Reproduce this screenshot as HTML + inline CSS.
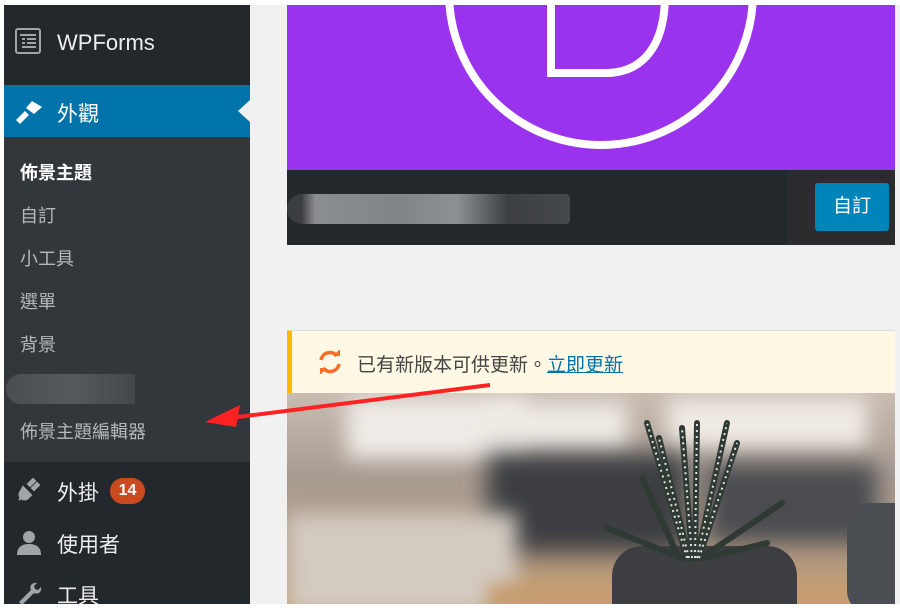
<!DOCTYPE html>
<html><head><meta charset="utf-8"><style>
*{margin:0;padding:0;box-sizing:border-box}
body{width:900px;height:604px;overflow:hidden;background:#fff;font-family:"Liberation Sans","Noto Sans CJK TC",sans-serif;position:relative}
.abs{position:absolute}
#side{left:4px;top:5px;width:246px;height:599px;background:#23282d}
.main{left:250px;top:5px;width:650px;height:599px;background:#f1f1f1}
.sub{color:#b4b9be;font-size:18px;left:20px}
</style></head><body>
<div class="abs" id="side"></div>
<div class="abs main"></div>
<svg class="abs" style="left:14px;top:27px" width="28" height="28" viewBox="0 0 28 28"><rect x="2" y="2" width="24" height="24" rx="2" fill="none" stroke="#a0a5aa" stroke-width="2"/><path d="M6 8h16M8 12h3M13 12h9M8 16h3M13 16h9M8 20h14" stroke="#a0a5aa" stroke-width="2"/></svg>
<div class="abs" style="left:57px;top:30px;color:#eee;font-size:22px">WPForms</div>
<div class="abs" style="left:4px;top:85px;width:246px;height:52px;background:#0073aa"></div>
<div class="abs" style="left:238px;top:100px;width:0;height:0;border-top:11px solid transparent;border-bottom:11px solid transparent;border-right:12px solid #f1f1f1"></div>
<svg class="abs" style="left:14px;top:98px" width="30" height="26" viewBox="0 0 30 26"><path d="M2 22l9-9 4 4-9 9z" fill="#fff"/><path d="M12 10l6-7 10 6-8 7z" fill="#fff"/></svg>
<div class="abs" style="left:57px;top:98px;color:#fff;font-size:21px">外觀</div>
<div class="abs" style="left:4px;top:137px;width:246px;height:325px;background:#32373c"></div>
<div class="abs sub" style="top:159px;color:#fff;font-weight:bold">佈景主題</div>
<div class="abs sub" style="top:202px">自訂</div>
<div class="abs sub" style="top:245px">小工具</div>
<div class="abs sub" style="top:288px">選單</div>
<div class="abs sub" style="top:331px">背景</div>
<div class="abs" style="left:6px;top:374px;width:129px;height:30px;border-radius:15px 0 0 15px;background:linear-gradient(90deg,#4a4e53,#55595e 50%,#44484d)"></div>
<div class="abs sub" style="top:418px">佈景主題編輯器</div>
<svg class="abs" style="left:16px;top:476px" width="26" height="26" viewBox="0 0 26 26"><path d="M3 24l5-5M7 11l8 8-3 3c-2 2-5 2-7 0s-2-5 0-7z M12 8l5-5 2 2-5 5zM16 12l5-5 2 2-5 5z" fill="#a0a5aa" stroke="#a0a5aa" stroke-width="2"/></svg>
<div class="abs" style="left:57px;top:477px;color:#eee;font-size:21px">外掛</div>
<div class="abs" style="left:110px;top:478px;width:35px;height:26px;border-radius:13px;background:#ca4a1f;color:#fff;font-size:16px;font-weight:bold;text-align:center;line-height:26px">14</div>
<svg class="abs" style="left:16px;top:529px" width="26" height="26" viewBox="0 0 26 26"><circle cx="13" cy="8" r="6" fill="#a0a5aa"/><path d="M1 26c0-8 5-11 12-11s12 3 12 11z" fill="#a0a5aa"/></svg>
<div class="abs" style="left:57px;top:529px;color:#eee;font-size:21px">使用者</div>
<svg class="abs" style="left:16px;top:582px" width="26" height="22" viewBox="0 0 26 22"><path d="M3 20l12-12c-2-4 1-8 6-7l-3 3 1 3 3 1 3-3c1 5-3 8-7 6l-12 12z" fill="#a0a5aa"/></svg>
<div class="abs" style="left:57px;top:580px;color:#eee;font-size:21px">工具</div>
<div class="abs" style="left:287px;top:5px;width:608px;height:165px;background:#9933ee;overflow:hidden">
<svg width="608" height="165"><circle cx="314" cy="-12" r="152" fill="none" stroke="#fff" stroke-width="8"/><path d="M264 -10V68h54c40 0 60-30 60-78" fill="none" stroke="#fff" stroke-width="8"/></svg></div>
<div class="abs" style="left:287px;top:170px;width:608px;height:75px;background:#23282d"></div>
<div class="abs" style="left:787px;top:170px;width:108px;height:75px;background:#2c2c2e"></div>
<div class="abs" style="left:287px;top:194px;width:283px;height:30px;border-radius:15px 4px 4px 15px;background:linear-gradient(90deg,#3a3d41 5%,#8a8d90 10%,#80858a 40%,#8c9093 60%,#3c3f43 78%,#45484c)"></div>
<div class="abs" style="left:815px;top:183px;width:74px;height:48px;background:#0085ba;border-radius:3px;color:#fff;font-size:19px;text-align:center;line-height:48px">自訂</div>
<div class="abs" style="left:287px;top:330px;width:608px;height:63px;background:#fff8e5;border-left:5px solid #ffb900;border-top:1px solid #ddd"></div>
<svg class="abs" style="left:317px;top:350px" width="26" height="24" viewBox="0 0 26 24"><path d="M4 10a9 9 0 0 1 16-4M22 14a9 9 0 0 1-16 4" fill="none" stroke="#f56e28" stroke-width="3.5"/><path d="M16 6h7v-7z M10 18h-7v7z" fill="#f56e28"/></svg>
<div class="abs" style="left:357px;top:350px;font-size:19px;color:#444">已有新版本可供更新。<span style="color:#0073aa;text-decoration:underline">立即更新</span></div>
<div class="abs" style="left:287px;top:393px;width:608px;height:211px;background:linear-gradient(180deg,#c9bdb2 0%,#a89c92 40%,#b09a84 70%,#c29d74 100%);overflow:hidden">
<div class="abs" style="left:60px;top:5px;width:180px;height:60px;background:#efebe6;filter:blur(10px)"></div>
<div class="abs" style="left:200px;top:10px;width:140px;height:50px;background:#eeeae4;filter:blur(10px)"></div>
<div class="abs" style="left:380px;top:5px;width:200px;height:50px;background:#efeae3;filter:blur(10px)"></div>
<div class="abs" style="left:200px;top:60px;width:200px;height:100px;background:#3c3e42;filter:blur(12px)"></div>
<div class="abs" style="left:420px;top:70px;width:170px;height:80px;background:#4a4c50;filter:blur(12px)"></div>
<div class="abs" style="left:0;top:120px;width:230px;height:100px;background:#d3cac1;filter:blur(10px)"></div>
<div class="abs" style="left:200px;top:190px;width:420px;height:30px;background:#c59d70;filter:blur(8px)"></div>
<div class="abs" style="left:560px;top:110px;width:50px;height:110px;background:#4a4d51;border-radius:22px 0 0 22px"></div>
<div class="abs" style="left:325px;top:153px;width:185px;height:70px;background:#3d3e41;border-radius:30px 30px 0 0"></div>
<svg class="abs" style="left:0;top:0" width="608" height="211"><g stroke="#2f3a34" stroke-width="6" stroke-linecap="round"><path d="M400 165L360 30M402 165L372 45M405 165L395 35M408 165L410 30M410 165L440 30M412 165L450 50M414 165L495 110M395 165L320 135M418 165L480 150M392 165L355 85"/></g><g stroke="#e5e5e0" stroke-width="2" stroke-dasharray="2 4"><path d="M400 165L360 30M402 165L372 45M405 165L395 35M408 165L410 30M410 165L440 30M412 165L450 50"/></g></svg>
</div>
<svg class="abs" style="left:200px;top:380px" width="300" height="50"><path d="M290 5L30 38" stroke="#f22" stroke-width="4"/><path d="M5 42L40 25L36 47z" fill="#f22"/></svg>
</body></html>
